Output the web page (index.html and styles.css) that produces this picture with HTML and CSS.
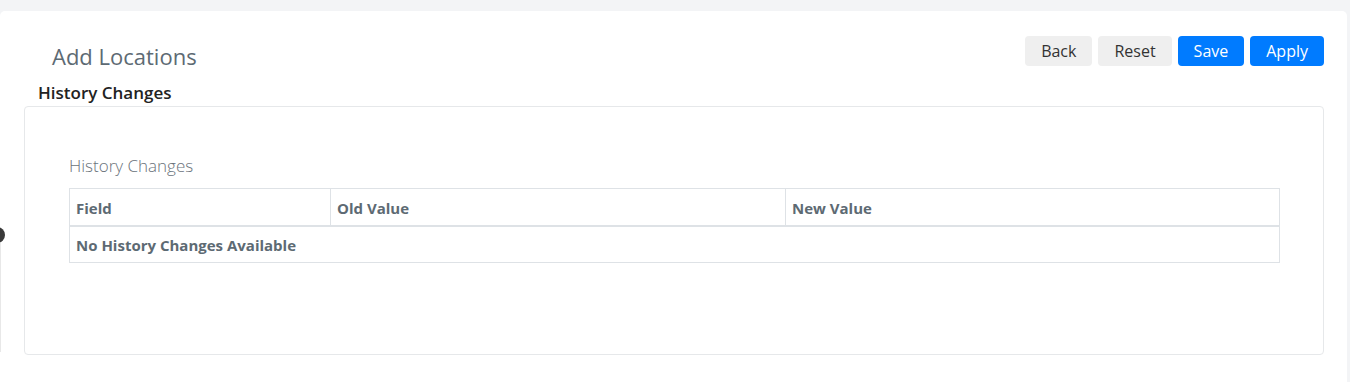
FILE: index.html
```html
<!DOCTYPE html>
<html lang="en">
<head>
<meta charset="utf-8">
<title>Add Locations</title>
<link rel="stylesheet" href="styles.css">
</head>
<body>
<div class="edge-dot"></div>
<div class="edge-line"></div>
<main class="panel">
  <header class="page-header">
    <h1 class="page-title">Add Locations</h1>
    <div class="actions">
      <button class="btn btn-light">Back</button>
      <button class="btn btn-light">Reset</button>
      <button class="btn btn-primary">Save</button>
      <button class="btn btn-primary">Apply</button>
    </div>
  </header>
  <h2 class="section-title">History Changes</h2>
  <section class="card">
    <h3 class="card-title">History Changes</h3>
    <table class="history-table">
      <colgroup>
        <col class="col-field">
        <col class="col-old">
        <col class="col-new">
      </colgroup>
      <thead>
        <tr><th>Field</th><th>Old Value</th><th>New Value</th></tr>
      </thead>
      <tbody>
        <tr><td colspan="3">No History Changes Available</td></tr>
      </tbody>
    </table>
  </section>
</main>
</body>
</html>
```

FILE: styles.css
```css
* { box-sizing: border-box; }
html, body { margin: 0; padding: 0; }
body {
  background: #f3f4f6;
  font-family: "Open Sans", "Noto Sans", sans-serif;
  height: 382px;
  overflow: hidden;
  position: relative;
}
.panel {
  margin: 11px 3px 0 0;
  background: #fff;
  border-radius: 5px 5px 0 0;
  height: 371px;
  padding: 25px 23px 0 24px;
}
.page-header {
  display: flex;
  justify-content: space-between;
  align-items: flex-start;
  margin-bottom: 10px;
}
.page-title {
  margin: 5px 0 0 28px;
  font-size: 22px;
  font-weight: 500;
  line-height: 30px;
  color: #5d6a73;
}
.actions {
  display: flex;
  gap: 6px;
}
.btn {
  height: 30px;
  border: none;
  border-radius: 4px;
  font-family: inherit;
  font-size: 16px;
  padding: 0 16px;
  cursor: pointer;
}
.btn-light { background: #efefef; color: #333; }
.btn-primary { background: #007bff; color: #fff; }
.section-title {
  margin: 0 0 0 14px;
  font-size: 17px;
  font-weight: 600;
  line-height: 24px;
  color: #222;
}
.card {
  margin-top: 1px;
  border: 1px solid #e6e8ea;
  border-radius: 4px;
  height: 249px;
  padding: 47px 44px 0 44px;
}
.card-title {
  margin: 0 0 10px;
  font-size: 17px;
  font-weight: 300;
  line-height: 24px;
  color: #6a737b;
}
.history-table {
  width: 1210px;
  border-collapse: collapse;
  table-layout: fixed;
  color: #5d6a73;
  font-size: 15px;
}
.col-field { width: 261px; }
.col-old { width: 455px; }
.col-new { width: 494px; }
.history-table th,
.history-table td {
  border: 1px solid #dee2e6;
  text-align: left;
  font-weight: 700;
  padding: 2px 6px 0;
  height: 37px;
}
.history-table th { border-bottom: 2px solid #dee2e6; }
.edge-dot {
  position: absolute;
  left: -11px;
  top: 227px;
  width: 16px;
  height: 16px;
  border-radius: 50%;
  background: #3a3a3a;
  z-index: 3;
}
.edge-line {
  position: absolute;
  left: 0;
  top: 243px;
  width: 1px;
  height: 109px;
  background: #e8e8e8;
  z-index: 2;
}
```
